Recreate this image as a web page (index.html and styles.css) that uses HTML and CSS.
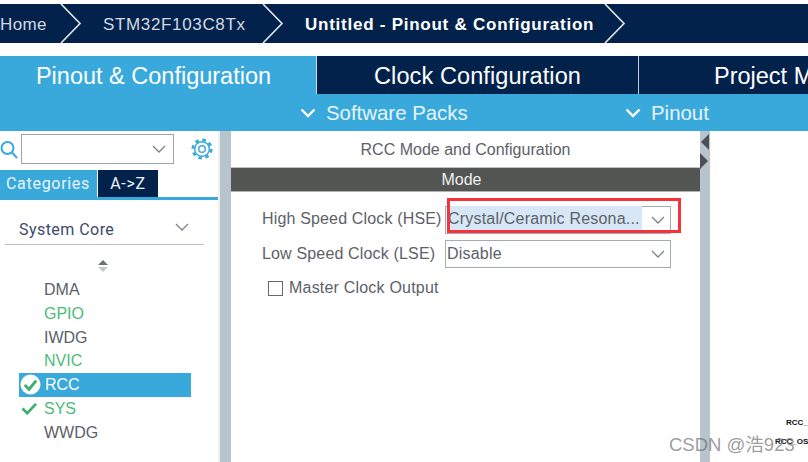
FILE: index.html
```html
<!DOCTYPE html>
<html lang="en">
<head>
  <meta charset="UTF-8">
  <title>STM32CubeMX - Pinout &amp; Configuration</title>
  <link rel="stylesheet" href="styles.css">
</head>
<body>
  <nav class="crumbs">
    <span class="crumb crumb-home">Home</span>
    <svg class="crumb-arrow" viewBox="0 0 22 39"><path d="M1 0 L20 19.5 L1 39"/></svg>
    <span class="crumb crumb-chip">STM32F103C8Tx</span>
    <svg class="crumb-arrow" viewBox="0 0 22 39"><path d="M1 0 L20 19.5 L1 39"/></svg>
    <span class="crumb crumb-current">Untitled - Pinout &amp; Configuration</span>
    <svg class="crumb-arrow" viewBox="0 0 22 39"><path d="M1 0 L20 19.5 L1 39"/></svg>
  </nav>

  <div class="tabs">
    <div class="tab tab-active">Pinout &amp; Configuration</div>
    <div class="tab tab-clock">Clock Configuration</div>
    <div class="tab tab-project">Project Manager</div>
  </div>

  <div class="subbar">
    <span class="sub-item sub-packs">
      <svg class="sub-chevron" viewBox="0 0 16 10"><path d="M1.5 1.5 L8 8 L14.5 1.5"/></svg>
      Software Packs
    </span>
    <span class="sub-item sub-pinout">
      <svg class="sub-chevron" viewBox="0 0 16 10"><path d="M1.5 1.5 L8 8 L14.5 1.5"/></svg>
      Pinout
    </span>
  </div>

  <main class="workspace">
    <aside class="side">
      <div class="search-row">
        <svg class="search-icon" viewBox="0 0 18 20"><circle cx="7.5" cy="8" r="6"/><path d="M12 12.5 L17 18"/></svg>
        <div class="search-box">
          <svg class="chevron" viewBox="0 0 14 8"><path d="M1 1 L7 7 L13 1"/></svg>
        </div>
        <svg class="gear" viewBox="0 0 24 24">
          <circle class="gear-teeth" cx="12" cy="12" r="10"/>
          <circle class="gear-rim" cx="12" cy="12" r="8"/>
          <circle class="gear-hub" cx="12" cy="12" r="3.6"/>
        </svg>
      </div>
      <div class="side-tabs">
        <div class="side-tab side-tab-active">Categories</div>
        <div class="side-tab side-tab-az">A-&gt;Z</div>
      </div>
      <div class="category">
        <span>System Core</span>
        <svg class="chevron" viewBox="0 0 14 8"><path d="M1 1 L7 7 L13 1"/></svg>
      </div>
      <div class="sort-arrows">
        <i class="sort-up"></i>
        <i class="sort-down"></i>
      </div>
      <ul class="periph">
        <li>DMA</li>
        <li class="ok">GPIO</li>
        <li>IWDG</li>
        <li class="ok">NVIC</li>
        <li class="selected">
          <svg class="check-badge" viewBox="0 0 22 22"><circle cx="11" cy="11" r="10.5"/><path d="M5 11.5 L9.5 16 L17 7"/></svg>
          RCC
        </li>
        <li class="ok">
          <svg class="check" viewBox="0 0 18 14"><path d="M1.5 7 L6.5 12 L16 2"/></svg>
          SYS
        </li>
        <li>WWDG</li>
      </ul>
    </aside>

    <div class="gutter"></div>

    <section class="config">
      <h2 class="config-title">RCC Mode and Configuration</h2>
      <div class="mode-bar">Mode</div>
      <div class="form">
        <div class="form-row">
          <label class="form-label">High Speed Clock (HSE)</label>
          <div class="select">
            <span class="select-value select-value-hl">Crystal/Ceramic Resona...</span>
            <svg class="chevron" viewBox="0 0 14 8"><path d="M1 1 L7 7 L13 1"/></svg>
          </div>
        </div>
        <div class="form-row">
          <label class="form-label">Low Speed Clock (LSE)</label>
          <div class="select">
            <span class="select-value">Disable</span>
            <svg class="chevron" viewBox="0 0 14 8"><path d="M1 1 L7 7 L13 1"/></svg>
          </div>
        </div>
        <div class="check-row">
          <span class="checkbox"></span>
          <span>Master Clock Output</span>
        </div>
      </div>
      <div class="red-box"></div>
    </section>

    <div class="gutter gutter-right">
      <i class="arrow-left"></i>
      <i class="arrow-right"></i>
    </div>

    <section class="chip-view">
      <span class="pin pin-a">RCC_</span>
      <span class="pin pin-b">RCC_OS</span>
    </section>
  </main>

  <div class="watermark">CSDN @浩923</div>
</body>
</html>
```

FILE: styles.css
```css
html, body {
  margin: 0;
  padding: 0;
}
body {
  width: 808px;
  height: 462px;
  overflow: hidden;
  position: relative;
  background: #fff;
  font-family: "Liberation Sans", Arial, sans-serif;
  color: #5d6168;
}

/* breadcrumb */
.crumbs {
  display: flex;
  align-items: center;
  height: 39px;
  margin-top: 4px;
  background: #02224c;
  color: #d4dae2;
  font-size: 17px;
}
.crumb {
  margin-top: 2px;
  white-space: nowrap;
  letter-spacing: 0.4px;
}
.crumb-home {
  width: 60px;
}
.crumb-chip {
  width: 159px;
  margin-left: 21px;
  letter-spacing: 0.65px;
}
.crumb-current {
  width: 299px;
  margin-left: 21px;
  color: #fff;
  font-weight: bold;
  letter-spacing: 0.75px;
}
.crumb-arrow {
  width: 22px;
  height: 39px;
  flex: none;
}
.crumb-arrow path {
  fill: none;
  stroke: #e4e8ec;
  stroke-width: 1.6;
}

/* main tabs */
.tabs {
  display: flex;
  height: 38px;
  margin-top: 13px;
  background: #02224c;
  color: #fff;
  font-size: 23.5px;
  line-height: 40px;
  overflow: hidden;
}
.tab {
  flex: none;
  box-sizing: border-box;
  text-align: center;
  white-space: nowrap;
}
.tab-active {
  width: 316px;
  padding-right: 9px;
  background: #39a9dc;
}
.tab-clock {
  width: 323px;
  letter-spacing: 0.1px;
  border-left: 1px solid #d8dde2;
  border-right: 1px solid #c4ccd4;
}
.tab-project {
  padding-left: 75px;
}

/* sub menu */
.subbar {
  display: flex;
  height: 37px;
  background: #39a9dc;
  color: #e6f4fb;
  font-size: 20.4px;
  line-height: 38px;
}
.sub-item {
  display: flex;
  align-items: center;
  white-space: nowrap;
}
.sub-packs {
  width: 325px;
  margin-left: 300px;
}
.sub-chevron {
  width: 16px;
  height: 10px;
  margin-right: 10px;
}
.sub-chevron path {
  fill: none;
  stroke: #fff;
  stroke-width: 2.4;
}

/* workspace */
.workspace {
  display: flex;
  height: 331px;
}
.chevron {
  width: 14px;
  height: 8px;
  flex: none;
}
.chevron path {
  fill: none;
  stroke: #7e8389;
  stroke-width: 1.3;
}

/* left panel */
.side {
  width: 220px;
  flex: none;
  box-sizing: border-box;
  border-right: 2px solid #eef1f3;
}
.search-row {
  display: flex;
  align-items: flex-start;
  padding-top: 3px;
}
.search-icon {
  width: 18px;
  height: 20px;
  margin: 6px 3px 0 0;
  flex: none;
}
.search-icon circle,
.search-icon path {
  fill: none;
  stroke: #39a9dc;
  stroke-width: 2;
}
.search-box {
  display: flex;
  align-items: center;
  justify-content: flex-end;
  box-sizing: border-box;
  width: 153px;
  height: 30px;
  padding-right: 7px;
  border: 1px solid #9da2a6;
}
.gear {
  width: 22px;
  height: 22px;
  margin: 4px 0 0 17px;
}
.gear circle {
  fill: none;
  stroke: #39a9dc;
}
.gear .gear-teeth {
  stroke-width: 3;
  stroke-dasharray: 3.9 3.95;
}
.gear .gear-rim {
  stroke-width: 1.6;
}
.gear .gear-hub {
  stroke-width: 1.6;
}
.side-tabs {
  display: flex;
  height: 27px;
  margin-top: 6px;
  border-bottom: 3px solid #39a9dc;
  font-family: Roboto, sans-serif;
  font-size: 16px;
  line-height: 27px;
}
.side-tab {
  color: #eaf5fb;
  letter-spacing: 0.7px;
}
.side-tab-active {
  width: 91px;
  padding-left: 6px;
  background: #39a9dc;
}
.side-tab-az {
  width: 60px;
  margin-left: 1px;
  background: #02224c;
  text-align: center;
}
.category {
  display: flex;
  align-items: center;
  justify-content: space-between;
  box-sizing: border-box;
  width: 199px;
  height: 31px;
  margin: 14px 0 0 5px;
  padding: 0 15px 0 14px;
  border-bottom: 1px solid #b9bfc6;
  font-family: Roboto, sans-serif;
  font-size: 16px;
  letter-spacing: 0.45px;
  color: #3c4a70;
}
.category .chevron {
  margin-bottom: 4px;
}
.sort-arrows {
  display: flex;
  flex-direction: column;
  align-items: center;
  gap: 2px;
  width: 206px;
  margin-top: 15px;
  margin-bottom: 3px;
}
.sort-up,
.sort-down {
  width: 0;
  height: 0;
  border-left: 5px solid transparent;
  border-right: 5px solid transparent;
}
.sort-up {
  border-bottom: 5px solid #6e7274;
}
.sort-down {
  border-top: 5px solid #c4c8ca;
}
.periph {
  list-style: none;
  margin: 6px 0 0 19px;
  padding: 0;
  width: 172px;
  font-size: 16px;
}
.periph li {
  position: relative;
  box-sizing: border-box;
  height: 23.8px;
  padding-left: 25px;
  line-height: 24px;
  color: #5b5f68;
}
.periph .ok {
  color: #4cbb78;
}
.periph .selected {
  padding-left: 26px;
  background: #39a9dc;
  color: #fff;
}
.check-badge {
  position: absolute;
  left: 1px;
  top: 1px;
  width: 21px;
  height: 21px;
}
.check-badge circle {
  fill: #fff;
}
.check-badge path,
.check path {
  fill: none;
  stroke: #3fae70;
  stroke-width: 3;
}
.check {
  position: absolute;
  left: 2px;
  top: 5px;
  width: 17px;
  height: 13px;
}

/* gutters */
.gutter {
  width: 11px;
  flex: none;
  background: #b8c4cc;
}
.gutter-right {
  display: flex;
  flex-direction: column;
  gap: 3px;
  width: 10px;
  padding-top: 3px;
  box-sizing: border-box;
}
.arrow-left,
.arrow-right {
  width: 0;
  height: 0;
  border-top: 8px solid transparent;
  border-bottom: 8px solid transparent;
}
.arrow-left {
  margin-left: 1px;
  border-right: 8px solid #4c5054;
}
.arrow-right {
  border-left: 8px solid #4c5054;
}

/* centre panel */
.config {
  position: relative;
  width: 469px;
  flex: none;
}
.config-title {
  margin: 0;
  height: 37px;
  box-sizing: border-box;
  padding-top: 9px;
  border-bottom: 1px solid #bfc3c5;
  font-size: 16px;
  font-weight: normal;
  line-height: 20px;
  text-align: center;
}
.mode-bar {
  height: 23px;
  padding-right: 8px;
  border-bottom: 1px solid #aeb1b2;
  background: #535553;
  color: #f0f0f0;
  font-size: 16px;
  line-height: 23px;
  text-align: center;
}
.form {
  padding: 14px 0 0 31px;
  font-size: 16px;
}
.form-row {
  display: flex;
  align-items: center;
  height: 28px;
  margin-bottom: 6px;
}
.form-label {
  width: 183px;
  flex: none;
  margin-top: -2px;
  white-space: nowrap;
  letter-spacing: 0.16px;
}
.form-row + .form-row .form-label {
  margin-top: 0;
}
.select {
  display: flex;
  align-items: center;
  justify-content: space-between;
  box-sizing: border-box;
  width: 226px;
  height: 28px;
  padding: 0 5px 0 1px;
  border: 1px solid #a6abaf;
  letter-spacing: 0.2px;
}
.select-value-hl {
  width: 194px;
  margin-left: 1px;
  margin-top: -3px;
  line-height: 25px;
  background: #d7e7f5;
  white-space: nowrap;
}
.check-row {
  display: flex;
  align-items: center;
  gap: 6px;
  margin: 11px 0 0 6px;
  letter-spacing: 0.2px;
}
.checkbox {
  width: 13px;
  height: 13px;
  border: 1px solid #66696c;
}
.red-box {
  position: absolute;
  left: 216px;
  top: 67px;
  width: 228px;
  height: 29px;
  border: 3px solid #f5333a;
}

/* chip canvas */
.chip-view {
  position: relative;
  flex: 1;
}
.pin {
  position: absolute;
  font-size: 8px;
  font-weight: bold;
  color: #111;
  white-space: nowrap;
}
.pin-a {
  left: 76px;
  top: 287px;
}
.pin-b {
  left: 65px;
  top: 306px;
}

.watermark {
  position: absolute;
  left: 669px;
  top: 434px;
  font-family: "Liberation Sans", "Noto Sans CJK SC", sans-serif;
  font-size: 18.5px;
  line-height: 21px;
  color: rgba(100, 100, 100, 0.65);
  white-space: nowrap;
}
```
